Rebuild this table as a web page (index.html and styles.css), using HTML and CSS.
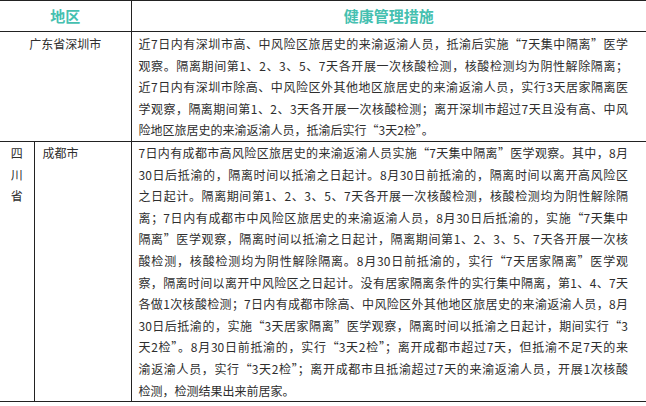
FILE: index.html
```html
<!DOCTYPE html>
<html lang="zh-CN">
<head>
<meta charset="utf-8">
<title>健康管理措施</title>
<link rel="stylesheet" href="styles.css">
</head>
<body>
<table class="policy">
  <colgroup>
    <col class="c-prov">
    <col class="c-city">
    <col class="c-measure">
  </colgroup>
  <thead>
    <tr>
      <th colspan="2">地区</th>
      <th>健康管理措施</th>
    </tr>
  </thead>
  <tbody>
    <tr class="row-sz">
      <td colspan="2" class="region">广东省深圳市</td>
      <td class="measure">
        <span class="ln">近7日内有深圳市高、中风险区旅居史的来渝返渝人员，抵渝后实施“7天集中隔离”医学</span>
        <span class="ln">观察。隔离期间第1、2、3、5、7天各开展一次核酸检测，核酸检测均为阴性解除隔离；</span>
        <span class="ln">近7日内有深圳市除高、中风险区外其他地区旅居史的来渝返渝人员，实行3天居家隔离医</span>
        <span class="ln">学观察，隔离期间第1、2、3天各开展一次核酸检测；离开深圳市超过7天且没有高、中风</span>
        <span class="ln end">险地区旅居史的来渝返渝人员，抵渝后实行“3天2检”。</span>
      </td>
    </tr>
    <tr class="row-cd">
      <td class="prov">四<br>川<br>省</td>
      <td class="city">成都市</td>
      <td class="measure">
        <span class="ln">7日内有成都市高风险区旅居史的来渝返渝人员实施“7天集中隔离”医学观察。其中，8月</span>
        <span class="ln">30日后抵渝的，隔离时间以抵渝之日起计。8月30日前抵渝的，隔离时间以离开高风险区</span>
        <span class="ln">之日起计。隔离期间第1、2、3、5、7天各开展一次核酸检测，核酸检测均为阴性解除隔</span>
        <span class="ln">离；7日内有成都市中风险区旅居史的来渝返渝人员，8月30日后抵渝的，实施“7天集中</span>
        <span class="ln">隔离”医学观察，隔离时间以抵渝之日起计，隔离期间第1、2、3、5、7天各开展一次核</span>
        <span class="ln">酸检测，核酸检测均为阴性解除隔离。8月30日前抵渝的，实行“7天居家隔离”医学观</span>
        <span class="ln">察，隔离时间以离开中风险区之日起计。没有居家隔离条件的实行集中隔离，第1、4、7天</span>
        <span class="ln">各做1次核酸检测；7日内有成都市除高、中风险区外其他地区旅居史的来渝返渝人员，8月</span>
        <span class="ln">30日后抵渝的，实施“3天居家隔离”医学观察，隔离时间以抵渝之日起计，期间实行“3</span>
        <span class="ln">天2检”。8月30日前抵渝的，实行“3天2检”；离开成都市超过7天，但抵渝不足7天的来</span>
        <span class="ln">渝返渝人员，实行“3天2检”；离开成都市且抵渝超过7天的来渝返渝人员，开展1次核酸</span>
        <span class="ln end">检测，检测结果出来前居家。</span>
      </td>
    </tr>
  </tbody>
</table>
</body>
</html>
```
FILE: styles.css
```css
html, body {
  margin: 0;
  padding: 0;
  background: #ffffff;
}

.policy {
  width: 646px;
  table-layout: fixed;
  border-collapse: collapse;
  font-family: "Noto Sans CJK SC", "Noto Sans", sans-serif;
  font-size: 12px;
  line-height: 21.6px;
  color: #2e2e2e;
  border-top: 1px solid #222222;
  border-bottom: 1px solid #222222;
}

.c-prov { width: 34px; }
.c-city { width: 97px; }
.c-measure { width: 515px; }

.policy th {
  height: 30px;
  padding: 0;
  font-size: 15px;
  font-weight: bold;
  color: #45c0b0;
  text-align: center;
  vertical-align: middle;
  border-bottom: 1px solid #222222;
  border-right: 1px solid #222222;
}

.policy th:last-child {
  border-right: none;
}

.policy td {
  padding: 0;
  vertical-align: top;
  border-top: 1px solid #222222;
  border-right: 1px solid #222222;
}

.policy td.measure {
  border-right: none;
  padding: 0 18px 0 7px;
}

.row-sz td.measure,
.row-sz td.region {
  padding-top: 1px;
}

.region {
  text-align: center;
}

.prov {
  text-align: center;
}

.policy td.city {
  padding-left: 8px;
}

.ln {
  display: block;
  text-align: justify;
  text-align-last: justify;
  white-space: nowrap;
}

.ln.end {
  text-align-last: left;
}
```
